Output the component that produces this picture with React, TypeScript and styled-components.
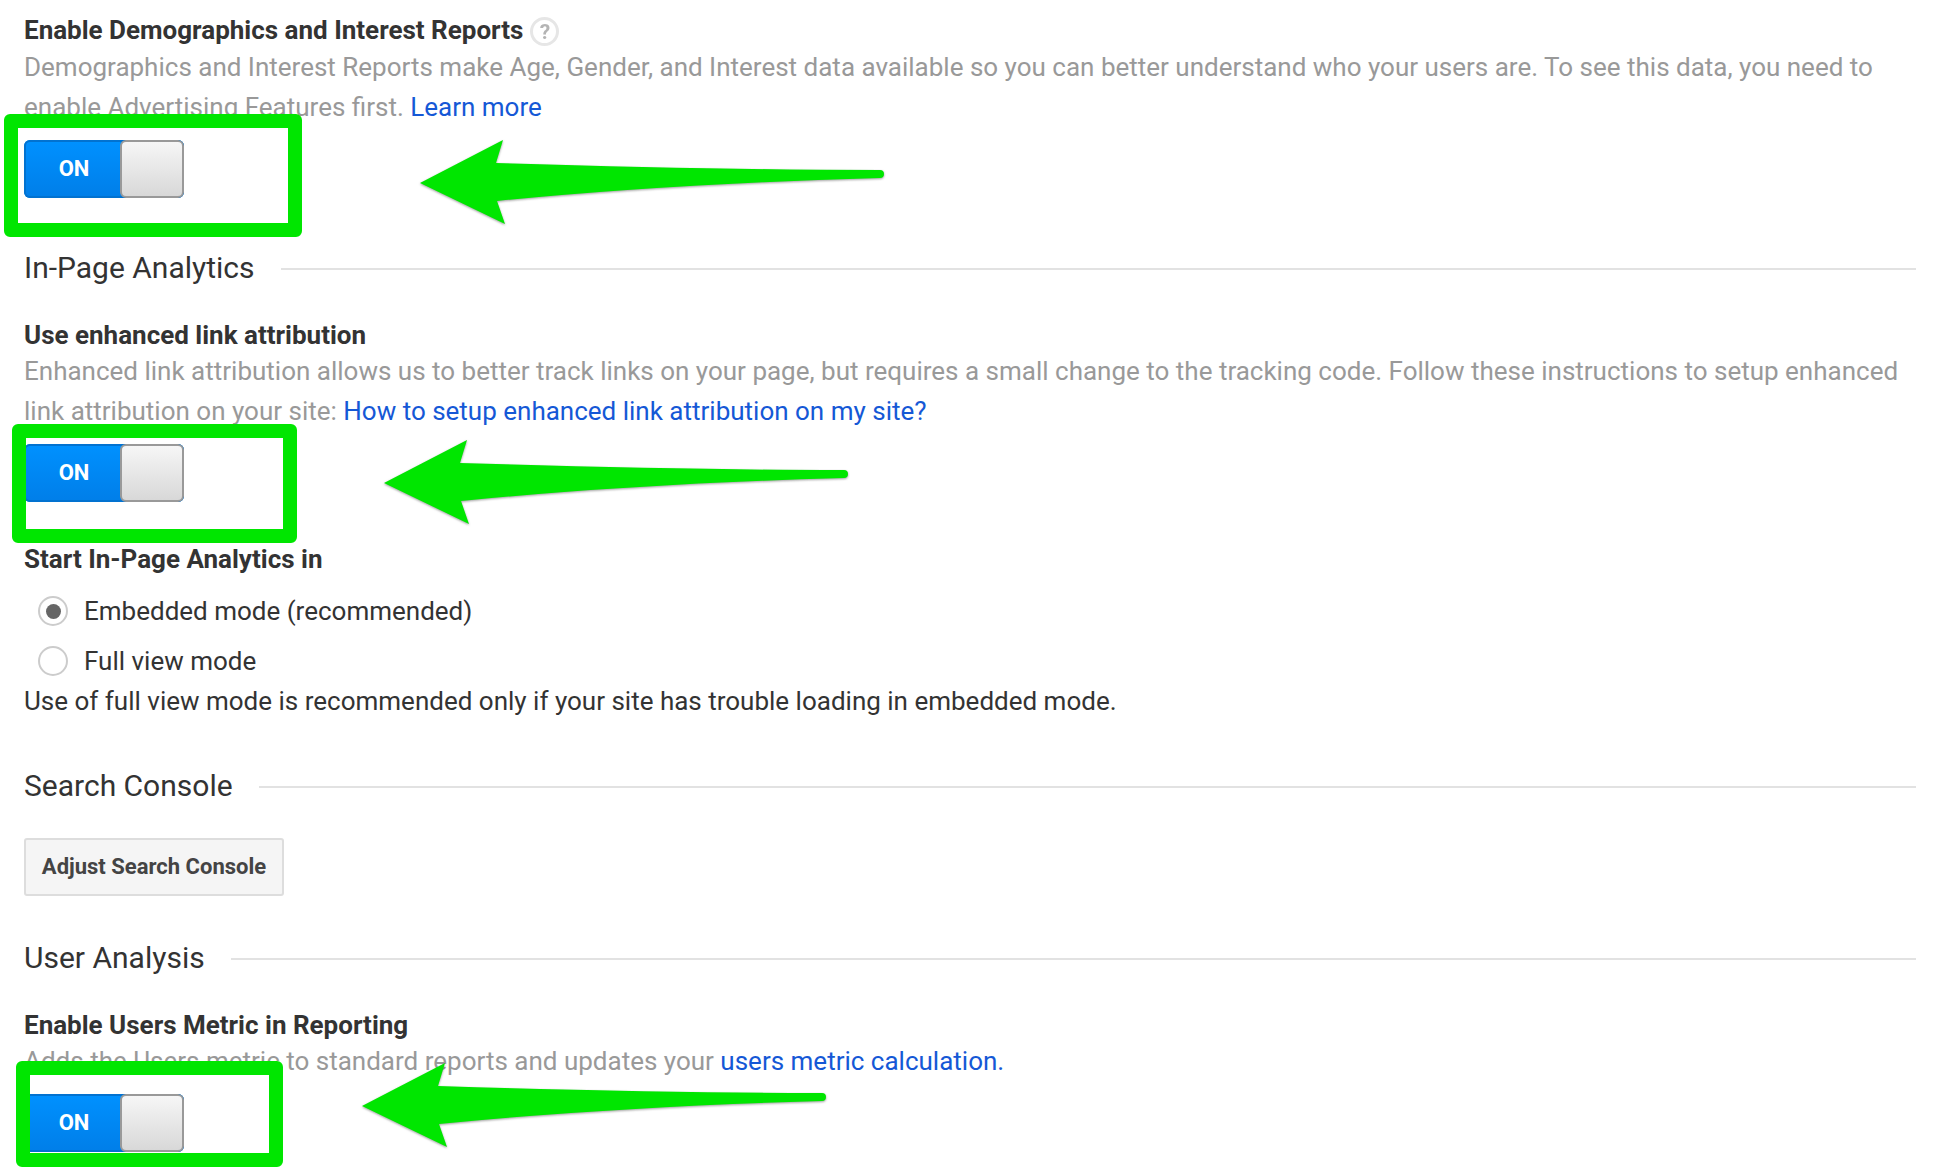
import React from "react";
import styled, {createGlobalStyle} from "styled-components";

const GlobalStyle = createGlobalStyle`
  html, body {
    margin: 0;
    padding: 0;
    background: #fff;
    overflow: hidden;
  }

  body {
    font-family: Roboto, "Liberation Sans", sans-serif;
    color: #333;
  }
`

const Page = styled.div`
  position: relative;
  width: 1938px;
  height: 1168px;
  overflow: hidden;
  padding: 14px 22px 0 24px;
  box-sizing: border-box;
`

const SectionHeader = styled.div<{ $top: number, $bottom: number }>`
  display: flex;
  align-items: center;
  gap: 26px;
  height: 40px;
  margin: ${(p) => p.$top - 1}px 0 ${(p) => p.$bottom + 1}px;
  font-size: 30px;
  font-weight: 400;
  color: #333;

  &::after {
    content: '';
    flex: 1;
    height: 2px;
    margin-top: 4px;
    background: #e2e2e2;
  }
`

const Title = styled.div<{ $top?: number }>`
  display: flex;
  align-items: center;
  height: 32px;
  margin-top: ${(p) => p.$top ?? 0}px;
  font-size: 26px;
  font-weight: 700;
  line-height: 32px;
  color: #333;
`

const HelpIcon = styled.span`
  display: inline-flex;
  align-items: center;
  justify-content: center;
  width: 29px;
  height: 29px;
  margin-left: 7px;
  margin-top: 3px;
  border: 3px solid #e6e6e6;
  border-radius: 50%;
  box-sizing: border-box;
  font-size: 21px;
  font-weight: 700;
  color: #b4b4b4;
  filter: blur(.5px);
`

const Desc = styled.p<{ $top?: number }>`
  margin: ${(p) => p.$top ?? 0}px 0 0;
  font-size: 26px;
  line-height: 40px;
  color: #999;
`

const Link = styled.a`
  color: #1558d6;
  text-decoration: none;
`

const Toggle = styled.div`
  display: flex;
  width: 160px;
  height: 58px;
  margin-top: 13px;
  border-radius: 6px;
  background: linear-gradient(#0091ff, #007ee8);
  box-shadow: inset 0 0 0 2px #0272d0;
`

const ToggleLabel = styled.span`
  width: 98px;
  padding-left: 2px;
  box-sizing: border-box;
  text-align: center;
  font-size: 22px;
  font-weight: 700;
  line-height: 58px;
  color: #fff;
`

const ToggleKnob = styled.span`
  flex: 1;
  margin-left: -2px;
  box-sizing: border-box;
  border: 2px solid #999;
  border-radius: 6px;
  background: linear-gradient(#f6f6f6, #d8d8d8);
`

const RadioGroup = styled.div`
  display: flex;
  flex-direction: column;
  gap: 10px;
  margin-top: 16px;
`

const RadioRow = styled.label`
  display: flex;
  align-items: center;
  gap: 16px;
  height: 40px;
  padding-left: 14px;
  font-size: 26px;
  color: #333;
`

const Radio = styled.span<{ $checked?: boolean }>`
  display: flex;
  align-items: center;
  justify-content: center;
  width: 30px;
  height: 30px;
  box-sizing: border-box;
  border: 2px solid #ccc;
  border-radius: 50%;

  &::after {
    content: '';
    display: ${(p) => (p.$checked ? "block" : "none")};
    width: 15px;
    height: 15px;
    border-radius: 50%;
    background: #666;
  }
`

const Note = styled.p`
  margin: 0;
  font-size: 26px;
  line-height: 40px;
  color: #333;
`

const Button = styled.button`
  display: block;
  width: 260px;
  height: 58px;
  padding: 0 0 2px;
  border: 2px solid #ddd;
  border-radius: 3px;
  background: #f5f5f5;
  font-family: inherit;
  font-size: 22px;
  font-weight: 700;
  color: #444;
`

/* annotations painted over the screenshot */
const GreenBox = styled.div<{ $left: number, $top: number, $width: number, $height: number }>`
  position: absolute;
  left: ${(p) => p.$left}px;
  top: ${(p) => p.$top}px;
  width: ${(p) => p.$width}px;
  height: ${(p) => p.$height}px;
  box-sizing: border-box;
  border: 14px solid #00e600;
  border-radius: 6px;
`

const ArrowSvg = styled.svg<{ $left: number, $top: number }>`
  position: absolute;
  left: ${(p) => p.$left}px;
  top: ${(p) => p.$top}px;
  filter: drop-shadow(0 1px 1px rgba(60, 60, 60, .5));
`

function Arrow({left, top}: { left: number, top: number }) {
    return (
        <ArrowSvg $left={left} $top={top} width="470" height="90" viewBox="0 0 470 90">
            <path
                d="M1 43 L84 0 L77 23 Q300 30 461 30 A4 4 0 0 1 461 38 Q250 44 78 61 L86 84 Z"
                fill="#00e600"/>
        </ArrowSvg>
    )
}

function Switch() {
    return (
        <Toggle>
            <ToggleLabel>ON</ToggleLabel>
            <ToggleKnob/>
        </Toggle>
    )
}

export default function App() {
    return (
        <Page>
            <GlobalStyle/>
            <Title>Enable Demographics and Interest Reports<HelpIcon>?</HelpIcon></Title>
            <Desc $top={1}>
                Demographics and Interest Reports make Age, Gender, and Interest data available so you can better
                understand who your users are. To see this data, you need to enable Advertising Features first.{" "}
                <Link>Learn more</Link>
            </Desc>
            <Switch/>
            <SectionHeader $top={50} $bottom={31}>In-Page Analytics</SectionHeader>
            <Title>Use enhanced link attribution</Title>
            <Desc>
                Enhanced link attribution allows us to better track links on your page, but requires a small change to
                the tracking code. Follow these instructions to setup enhanced link attribution on your site:{" "}
                <Link>How to setup enhanced link attribution on my site?</Link>
            </Desc>
            <Switch/>
            <Title $top={41}>Start In-Page Analytics in</Title>
            <RadioGroup>
                <RadioRow><Radio $checked/>Embedded mode (recommended)</RadioRow>
                <RadioRow><Radio/>Full view mode</RadioRow>
            </RadioGroup>
            <Note>Use of full view mode is recommended only if your site has trouble loading in embedded mode.</Note>
            <SectionHeader $top={45} $bottom={32}>Search Console</SectionHeader>
            <Button>Adjust Search Console</Button>
            <SectionHeader $top={42} $bottom={31}>User Analysis</SectionHeader>
            <Title>Enable Users Metric in Reporting</Title>
            <Desc>
                Adds the Users metric to standard reports and updates your{" "}
                <Link>users metric calculation.</Link>
            </Desc>
            <Switch/>

            <GreenBox $left={4} $top={114} $width={298} $height={123}/>
            <GreenBox $left={12} $top={424} $width={285} $height={119}/>
            <GreenBox $left={16} $top={1061} $width={267} $height={106}/>
            <Arrow left={419} top={140}/>
            <Arrow left={383} top={440}/>
            <Arrow left={361} top={1063}/>
        </Page>
    )
}
